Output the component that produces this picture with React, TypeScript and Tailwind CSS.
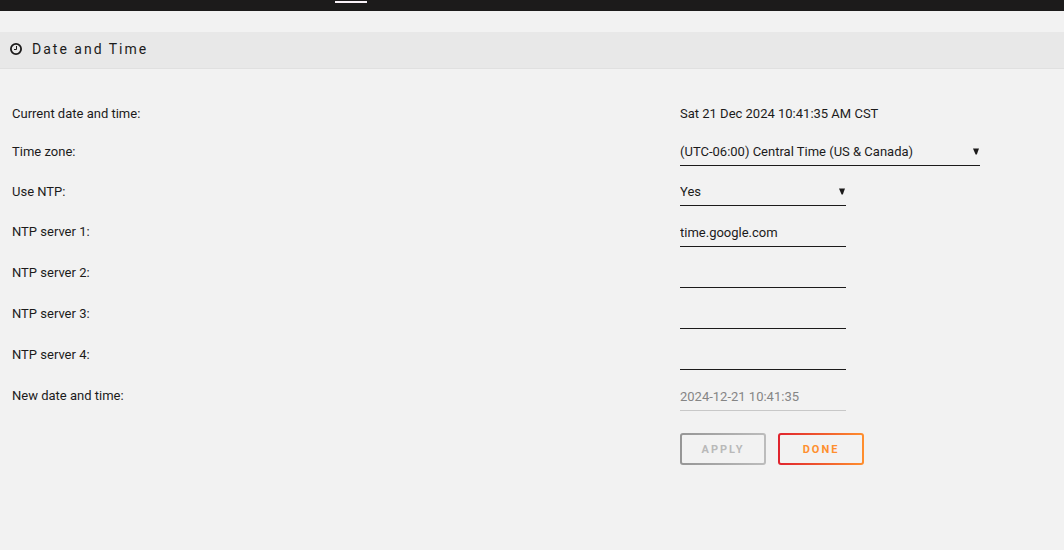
import { useState } from "react";
import type { ReactNode } from "react";

const CONTROL =
  "block h-[30px] w-full rounded-none border-0 border-b border-[#1c1b1b] bg-transparent p-0 pt-[2px] text-[13px] leading-[27px] text-[#1c1b1b] outline-none";

function Row({ id, label, children }: { id: string; label: string; children: ReactNode }) {
  return (
    <div className="grid grid-cols-[167fr_93fr] items-end">
      <label htmlFor={id} className="h-[30px]">
        {label}
      </label>
      {children}
    </div>
  );
}

function Picker({ id, options, width }: { id: string; options: string[]; width: string }) {
  return (
    <div className={`relative max-w-full ${width}`}>
      <select id={id} className={`${CONTROL} appearance-none`}>
        {options.map((option) => (
          <option key={option}>{option}</option>
        ))}
      </select>
      <svg
        viewBox="0 0 6 7"
        className="pointer-events-none absolute top-3 right-px h-[7px] w-[6px]"
        aria-hidden="true"
      >
        <path d="M0 0.4H6L3.8 6.6H2.6Z" fill="#1c1b1b" />
      </svg>
    </div>
  );
}

export default function App() {
  const [servers, setServers] = useState(["time.google.com", "", "", ""]);

  return (
    <div className="min-h-screen bg-[#f2f2f2] font-['Roboto',sans-serif] text-[13px] text-[#1c1b1b]">
      <nav className="h-[11px] bg-[#1c1b1b] pt-px pl-[335px]">
        <div className="h-[2px] w-8 bg-[#f8f1f7]" />
      </nav>

      <header className="mt-[21px] flex h-[37px] items-center gap-[10px] border-b border-[#e0e0e0] bg-[#e8e8e8] px-[10px] pb-[2px]">
        <svg viewBox="0 0 12 12" className="h-3 w-3" fill="none" stroke="#1c1b1b" aria-hidden="true">
          <circle cx="6" cy="6" r="5.1" strokeWidth="1.8" />
          <path d="M6.5 3V6.5H4" strokeWidth="1" />
        </svg>
        <h1 className="text-[14px] leading-5 tracking-[2px]">Date and Time</h1>
      </header>

      <form className="px-3 pt-[30px]" onSubmit={(event) => event.preventDefault()}>
        <div className="grid grid-cols-[167fr_93fr] leading-[30px]">
          <span>Current date and time:</span>
          <output>Sat 21 Dec 2024 10:41:35 AM CST</output>
        </div>

        <div className="mt-[7px] flex flex-col gap-[10px] leading-[31px]">
          <Row id="zone" label="Time zone:">
            <Picker id="zone" options={["(UTC-06:00) Central Time (US & Canada)"]} width="w-[300px]" />
          </Row>
          <Row id="ntp" label="Use NTP:">
            <Picker id="ntp" options={["Yes", "No"]} width="w-[166px]" />
          </Row>
        </div>

        <div className="mt-[11px] flex flex-col gap-[11px] leading-[29px]">
          {servers.map((server, index) => (
            <Row key={index} id={`server-${index}`} label={`NTP server ${index + 1}:`}>
              <div className="w-[166px] max-w-full">
                <input
                  id={`server-${index}`}
                  type="text"
                  className={CONTROL}
                  value={server}
                  onChange={(event) =>
                    setServers(servers.map((old, i) => (i === index ? event.target.value : old)))
                  }
                />
              </div>
            </Row>
          ))}
          <Row id="new-date" label="New date and time:">
            <div className="w-[166px] max-w-full">
              <input
                id="new-date"
                type="text"
                disabled
                defaultValue="2024-12-21 10:41:35"
                className="block h-[30px] w-full border-b border-[#c8c8c8] bg-transparent p-0 pt-[2px] text-[13px] text-[#858585]"
              />
            </div>
          </Row>
        </div>

        <div className="mt-[22px] grid grid-cols-[167fr_93fr]">
          <div className="col-start-2 flex gap-3 text-[11px] font-bold">
            <button
              type="button"
              disabled
              className="h-8 w-[86px] rounded-[3px] border-2 border-transparent [background:linear-gradient(#f2f2f2,#f2f2f2)_padding-box,linear-gradient(90deg,#969696,#bcbcbc)_border-box] pt-[2px] tracking-[2px] text-[#b9b9b9]"
            >
              APPLY
            </button>
            <button
              type="button"
              className="h-8 w-[86px] rounded-[3px] border-2 border-transparent [background:linear-gradient(#f2f2f2,#f2f2f2)_padding-box,linear-gradient(90deg,#e0232e,#ff8f2e)_border-box] pt-[2px] tracking-[2px] text-[#ff8f2e]"
            >
              DONE
            </button>
          </div>
        </div>
      </form>
    </div>
  );
}
